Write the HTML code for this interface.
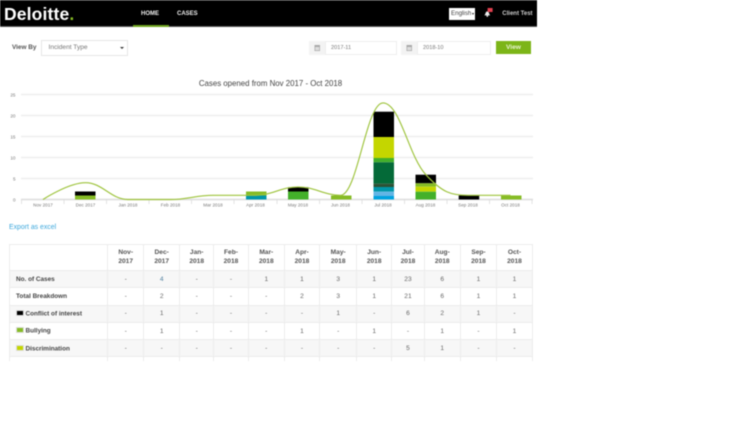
<!DOCTYPE html>
<html lang="en">
<head>
<meta charset="utf-8">
<title>Deloitte Dashboard</title>
<style>
html,body{margin:0;padding:0;background:#fff;width:750px;height:422px;overflow:hidden}
body{font-family:"Liberation Sans",sans-serif;color:#444;position:relative}
#wrap{position:absolute;left:0;top:0;width:750px;height:422px;filter:blur(.4px)}
.a{position:absolute;white-space:nowrap}
table{border-collapse:collapse;table-layout:fixed;width:522.8px;font-size:6.6px;color:#666}
td,th{border:1px solid #ececec;text-align:center;padding:0;font-weight:normal;overflow:hidden}
th{font-weight:bold;line-height:8.8px;color:#555;height:25px}
tr{height:17.3px}
tr:nth-child(even) td{background:#f7f7f7}
td:first-child{text-align:left;padding-left:6px;font-weight:bold;color:#444;font-size:6.4px}
i.k{display:inline-block;width:6px;height:4px;margin-right:1.5px;border:.5px solid #ddd;vertical-align:-.5px}
</style>
</head>
<body>
<div id="wrap">
  <div class="a" style="left:0;top:0;width:537px;height:26.5px;background:#000;border-top:1px solid #222;box-sizing:border-box;border-bottom:1px solid #555"></div>
  <div class="a" style="left:4px;top:3px;font-size:17.5px;font-weight:bold;color:#fff;line-height:22px;letter-spacing:.15px">Deloitte<span style="color:#86bc25">.</span></div>
  <div class="a" style="left:141px;top:10px;font-size:6px;font-weight:bold;color:#eee;line-height:8px">HOME</div>
  <div class="a" style="left:177px;top:10px;font-size:6px;font-weight:bold;color:#eee;line-height:8px">CASES</div>
  <div class="a" style="left:133px;top:25px;width:35.5px;height:1.5px;background:#6fa51e"></div>
  <div class="a" style="left:449px;top:7.5px;width:25.5px;height:12px;background:#fff;color:#444;font-size:6.2px;line-height:12px;text-indent:2px;overflow:hidden">English<span style="position:absolute;right:1px;top:5px;width:0;height:0;border:1.5px solid transparent;border-top:2px solid #222"></span></div>
  <svg class="a" style="left:484px;top:8px" width="9" height="9" viewBox="0 0 9 9">
    <path d="M.3 7.4C1.6 6.6 1.4 3.4 3.3 3.4S5 6.6 6.3 7.4Z" fill="#eee"/><circle cx="3.3" cy="8" r=".9" fill="#eee"/><rect x="3.6" y="0" width="5" height="4" fill="#e2404f"/>
  </svg>
  <div class="a" style="left:502.3px;top:10px;font-size:6px;font-weight:bold;color:#ccc;line-height:9px">Client Test</div>

  <div class="a" style="left:12px;top:43px;font-size:6.4px;font-weight:bold;color:#555;line-height:9px">View By</div>
  <div class="a" style="left:40.5px;top:40px;width:87.5px;height:16px;box-sizing:border-box;border:1px solid #e6e6e6;font-size:6.6px;color:#777;line-height:14px;padding-left:7px">Incident Type<span style="position:absolute;right:3px;top:6px;width:0;height:0;border:2px solid transparent;border-top:2.5px solid #333"></span></div>

  <div class="a" style="left:309px;top:41px;width:16px;height:14px;background:#f3f3f3"></div>
  <div class="a" style="left:325px;top:41px;width:72px;height:14px;box-sizing:border-box;border:1px solid #eee;font-size:5.6px;color:#777;line-height:12px;padding-left:5px">2017-11</div>
  <div class="a" style="left:401px;top:41px;width:16px;height:14px;background:#f3f3f3"></div>
  <div class="a" style="left:417px;top:41px;width:74px;height:14px;box-sizing:border-box;border:1px solid #eee;font-size:5.6px;color:#777;line-height:12px;padding-left:5px">2018-10</div>
  <svg class="a" style="left:314px;top:44px" width="7" height="8"><rect x=".5" y="1" width="5.5" height="6" fill="#a9a9a9"/><rect x="1.2" y="3" width="4.1" height="3.3" fill="#ddd"/></svg>
  <svg class="a" style="left:406px;top:44px" width="7" height="8"><rect x=".5" y="1" width="5.5" height="6" fill="#a9a9a9"/><rect x="1.2" y="3" width="4.1" height="3.3" fill="#ddd"/></svg>
  <div class="a" style="left:496.3px;top:41.3px;width:34.4px;height:13.2px;background:#7cb518;color:#e8f3d0;font-size:6.6px;font-weight:bold;line-height:13.8px;text-align:center">View</div>

  <svg class="a" style="left:0;top:70px" width="537" height="145" viewBox="0 70 537 145" font-family="Liberation Sans, sans-serif">
    <text x="270.5" y="86" text-anchor="middle" font-size="7.87" fill="#444">Cases opened from Nov 2017 - Oct 2018</text>
    <g stroke="#eeeeee" stroke-width="1.4">
      <line x1="21" x2="533" y1="94.5" y2="94.5"/>
      <line x1="21" x2="533" y1="115.5" y2="115.5"/>
      <line x1="21" x2="533" y1="136.5" y2="136.5"/>
      <line x1="21" x2="533" y1="157.5" y2="157.5"/>
      <line x1="21" x2="533" y1="178.5" y2="178.5"/>
      <line x1="21" x2="533" y1="199.5" y2="199.5" stroke="#dcdcdc"/>
      <g stroke="#dcdcdc" stroke-width=".8">
        <line x1="21.5" x2="21.5" y1="200" y2="204"/><line x1="64" x2="64" y1="200" y2="204"/><line x1="106.5" x2="106.5" y1="200" y2="204"/><line x1="149" x2="149" y1="200" y2="204"/><line x1="191.5" x2="191.5" y1="200" y2="204"/><line x1="234" x2="234" y1="200" y2="204"/><line x1="277" x2="277" y1="200" y2="204"/><line x1="319.5" x2="319.5" y1="200" y2="204"/><line x1="362" x2="362" y1="200" y2="204"/><line x1="404.5" x2="404.5" y1="200" y2="204"/><line x1="447" x2="447" y1="200" y2="204"/><line x1="489.5" x2="489.5" y1="200" y2="204"/><line x1="532" x2="532" y1="200" y2="204"/>
      </g>
    </g>
    <g font-size="4.6" fill="#777" text-anchor="end">
      <text x="15.5" y="96.5">25</text><text x="15.5" y="117.5">20</text><text x="15.5" y="138.5">15</text><text x="15.5" y="159.5">10</text><text x="15.5" y="180.5">5</text><text x="15.5" y="201.5">0</text>
    </g>
    <g font-size="4.6" fill="#777" text-anchor="middle">
      <text x="43" y="206.5">Nov 2017</text><text x="85.5" y="206.5">Dec 2017</text><text x="128" y="206.5">Jan 2018</text><text x="170.5" y="206.5">Feb 2018</text><text x="213" y="206.5">Mar 2018</text><text x="255.5" y="206.5">Apr 2018</text><text x="298" y="206.5">May 2018</text><text x="340.5" y="206.5">Jun 2018</text><text x="383" y="206.5">Jul 2018</text><text x="425.5" y="206.5">Aug 2018</text><text x="468" y="206.5">Sep 2018</text><text x="510.5" y="206.5">Oct 2018</text>
    </g>
    <!-- bars -->
    <rect x="75" y="191.5" width="20.5" height="4" fill="#000"/><rect x="75" y="195.5" width="20.5" height="4" fill="#86bc25"/>
    <rect x="246" y="191.5" width="20.5" height="4" fill="#86bc25"/><rect x="246" y="195.5" width="20.5" height="4" fill="#0097a9"/>
    <rect x="288" y="187.3" width="20.5" height="4.2" fill="#000"/><rect x="288" y="191.5" width="20.5" height="8" fill="#43b02a"/>
    <rect x="331" y="195.5" width="20.5" height="4" fill="#86bc25"/>
    <rect x="373.5" y="111.7" width="20.5" height="25.3" fill="#000"/>
    <rect x="373.5" y="137" width="20.5" height="21" fill="#c4d600"/>
    <rect x="373.5" y="158" width="20.5" height="4.3" fill="#43b02a"/>
    <rect x="373.5" y="162.3" width="20.5" height="21.4" fill="#046a38"/>
    <rect x="373.5" y="183.7" width="20.5" height="3.3" fill="#2c5234"/>
    <rect x="373.5" y="187" width="20.5" height="4.7" fill="#0097a9"/>
    <rect x="373.5" y="191.7" width="20.5" height="4.3" fill="#62b5e5"/>
    <rect x="373.5" y="196" width="20.5" height="3.5" fill="#00a3e0"/>
    <rect x="415.5" y="174.7" width="20.5" height="8.6" fill="#000"/>
    <rect x="415.5" y="183.3" width="20.5" height="3.4" fill="#86bc25"/>
    <rect x="415.5" y="186.7" width="20.5" height="5" fill="#c4d600"/>
    <rect x="415.5" y="191.7" width="20.5" height="7.8" fill="#43b02a"/>
    <rect x="458.7" y="195.5" width="20.5" height="4" fill="#000"/>
    <rect x="501" y="195.5" width="20.5" height="4" fill="#86bc25"/>
    <!-- spline -->
    <path fill="none" stroke="#9dc33b" stroke-width="1.15" d="M43 199.5C43 199.5 68.5 182.7 85.5 182.7C102.5 182.7 111 199.5 128 199.5C145 199.5 153.5 199.5 170.5 199.5C187.5 199.5 196 195.3 213 195.3C230 195.3 238.5 195.3 255.5 195.3C272.5 195.3 281 186.9 298 186.9C315 186.9 323.5 195.3 340.5 195.3C357.5 195.3 366 102.9 383 102.9C400 102.9 408.5 155.8 425.5 174.3C442.5 192.8 451 195.3 468 195.3C485 195.3 493.5 195.3 510.5 195.3"/>
  </svg>

  <div class="a" style="left:9px;top:223px;font-size:6.9px;color:#3ba7dc;line-height:9px">Export as excel</div>

  <div class="a" style="left:9px;top:244px;width:524px;height:117px;overflow:hidden">
    <table>
      <colgroup><col style="width:98.2px"><col style="width:36px"><col style="width:36px"><col style="width:34px"><col style="width:34.6px"><col style="width:36px"><col style="width:35.4px"><col style="width:37px"><col style="width:35px"><col style="width:32.6px"><col style="width:36px"><col style="width:36.4px"><col style="width:35.6px"></colgroup>
      <tr style="height:26px"><th></th><th>Nov-<br>2017</th><th>Dec-<br>2017</th><th>Jan-<br>2018</th><th>Feb-<br>2018</th><th>Mar-<br>2018</th><th>Apr-<br>2018</th><th>May-<br>2018</th><th>Jun-<br>2018</th><th>Jul-<br>2018</th><th>Aug-<br>2018</th><th>Sep-<br>2018</th><th>Oct-<br>2018</th></tr>
      <tr><td>No. of Cases</td><td>-</td><td style="color:#4f7f9f">4</td><td>-</td><td>-</td><td>1</td><td>1</td><td>3</td><td>1</td><td>23</td><td>6</td><td>1</td><td>1</td></tr>
      <tr><td>Total Breakdown</td><td>-</td><td>2</td><td>-</td><td>-</td><td>-</td><td>2</td><td>3</td><td>1</td><td>21</td><td>6</td><td>1</td><td>1</td></tr>
      <tr><td><i class="k" style="background:#000"></i>Conflict of interest</td><td>-</td><td>1</td><td>-</td><td>-</td><td>-</td><td>-</td><td>1</td><td>-</td><td>6</td><td>2</td><td>1</td><td>-</td></tr>
      <tr><td><i class="k" style="background:#86bc25"></i>Bullying</td><td>-</td><td>1</td><td>-</td><td>-</td><td>-</td><td>1</td><td>-</td><td>1</td><td>-</td><td>1</td><td>-</td><td>1</td></tr>
      <tr><td><i class="k" style="background:#c4d600"></i>Discrimination</td><td>-</td><td>-</td><td>-</td><td>-</td><td>-</td><td>-</td><td>-</td><td>-</td><td>5</td><td>1</td><td>-</td><td>-</td></tr>
      <tr><td>&nbsp;</td><td></td><td></td><td></td><td></td><td></td><td></td><td></td><td></td><td></td><td></td><td></td><td></td></tr>
    </table>
  </div>
</div>
</body>
</html>
